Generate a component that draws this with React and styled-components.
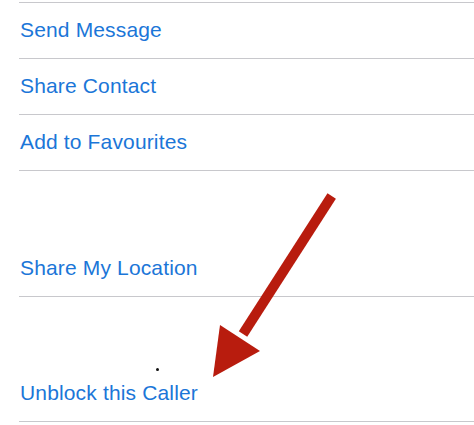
import React from "react";
import styled, { createGlobalStyle } from "styled-components";

const Global = createGlobalStyle`
  html, body { margin: 0; padding: 0; background: #fff; }
  body { font-family: "Liberation Sans", Arial, sans-serif; }
`;

const Screen = styled.div`
  position: relative;
  width: 474px;
  height: 425px;
  overflow: hidden;
  background: #fff;
`;

const List = styled.ul`
  list-style: none;
  margin: 2px 0 0 19px;
  padding: 0;
  border-top: 1px solid #c8c8cc;
`;

const Row = styled.li`
  box-sizing: border-box;
  height: ${(p) => p.$h}px;
  display: flex;
  align-items: flex-end;
  padding: 0 0 16px 1px;
  border-bottom: 1px solid #c8c8cc;
`;

const Action = styled.span`
  font-size: 21px;
  line-height: 24px;
  color: #1b76d8;
  letter-spacing: 0.15px;
`;

const Dot = styled.span`
  position: absolute;
  left: 156px;
  top: 368px;
  width: 3px;
  height: 3px;
  border-radius: 50%;
  background: #111;
`;

const ArrowSvg = styled.svg`
  position: absolute;
  left: 0;
  top: 0;
  pointer-events: none;
`;

const rows = [
  { label: "Send Message", h: 56 },
  { label: "Share Contact", h: 56 },
  { label: "Add to Favourites", h: 56 },
  { label: "Share My Location", h: 126 },
  { label: "Unblock this Caller", h: 125 },
];

export default function App() {
  return (
    <Screen>
      <Global />
      <List>
        {rows.map((r) => (
          <Row key={r.label} $h={r.h}>
            <Action>{r.label}</Action>
          </Row>
        ))}
      </List>
      <Dot />
      <ArrowSvg width="474" height="425" viewBox="0 0 474 425">
        <line x1="331.7" y1="196" x2="243" y2="334" stroke="#b81c0e" strokeWidth="10" />
        <polygon points="220,325 260,351 213,377" fill="#b81c0e" />
      </ArrowSvg>
    </Screen>
  );
}
